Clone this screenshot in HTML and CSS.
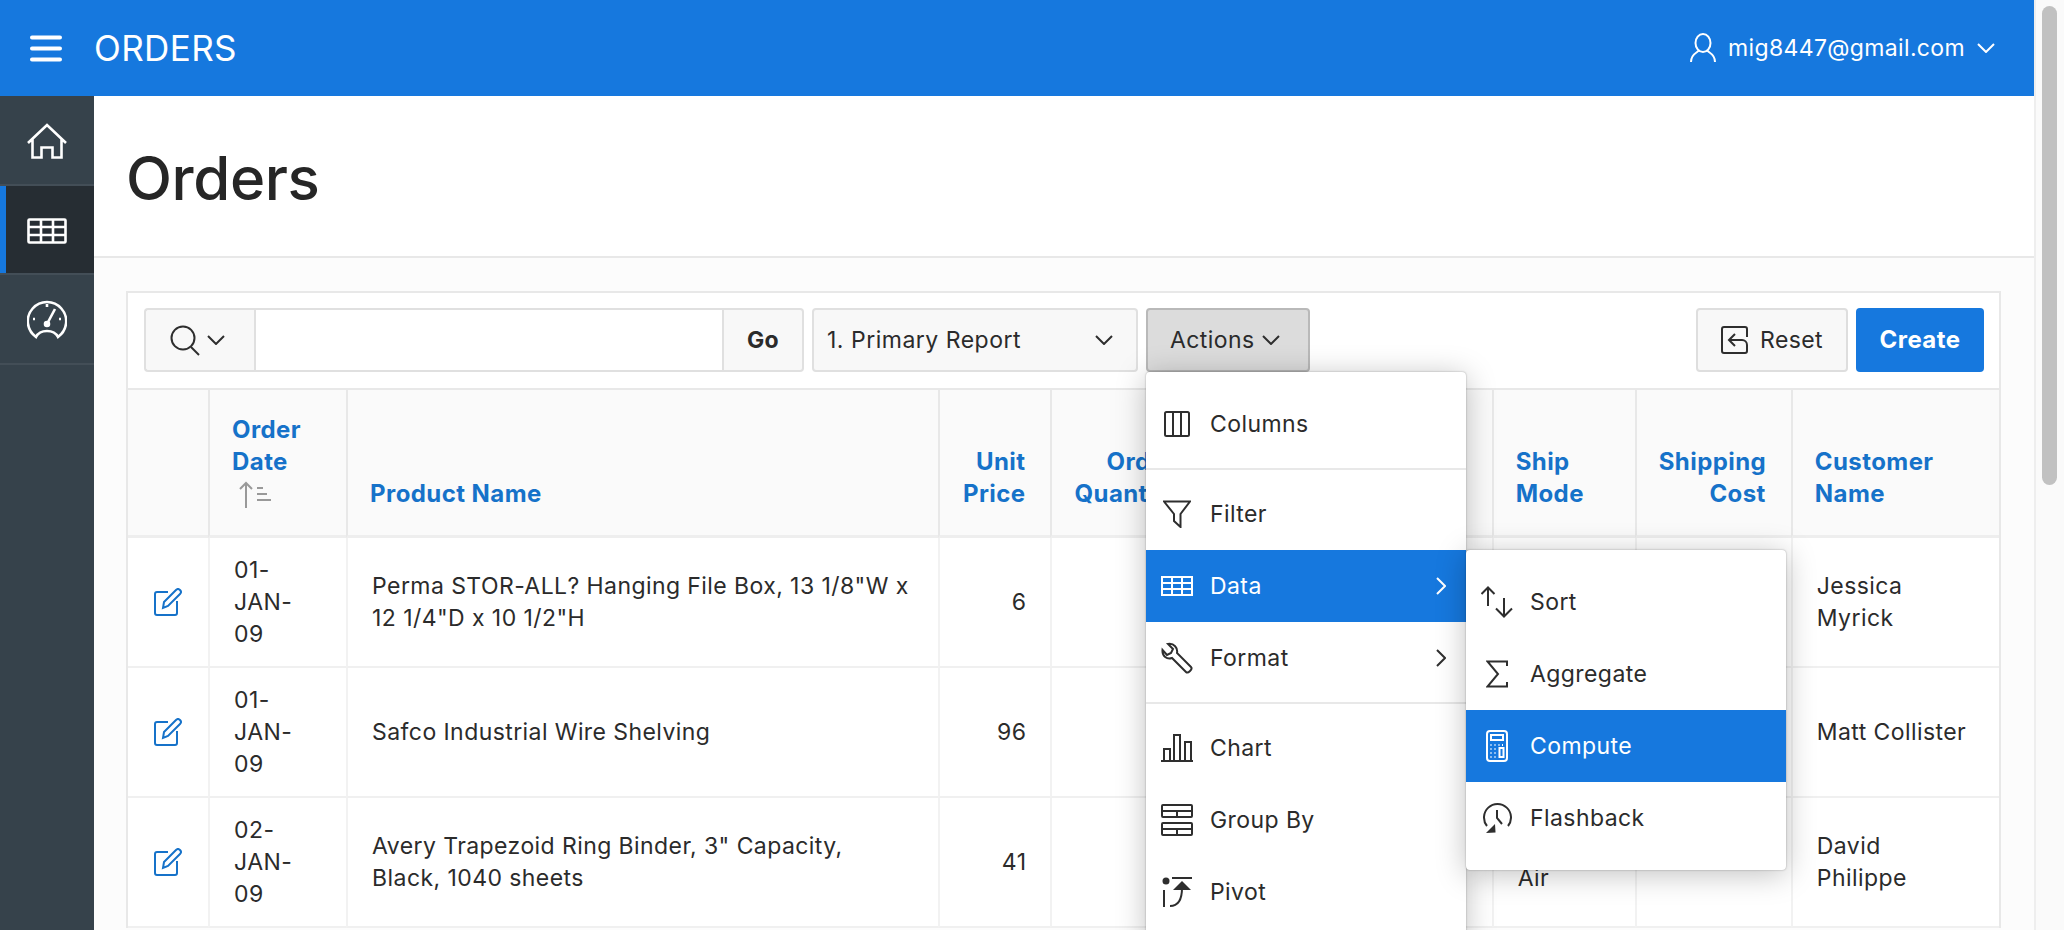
FILE: index.html
```html
<!DOCTYPE html>
<html lang="en">
<head>
  <meta charset="UTF-8" />
  <title>Orders</title>
  <link rel="stylesheet" href="styles.css">
</head>
<body>
  <div class="page">
    <header class="topbar">
      <svg class="burger" width="32" height="27" viewBox="0 0 32 27"><path d="M2 2.5H30M2 13.5H30M2 24.5H30" /></svg>
      <span class="app-name">ORDERS</span>
      <div class="user">
        <svg width="26" height="30" viewBox="0 0 26 30" class="line"><ellipse cx="13" cy="10" rx="7.5" ry="9" /><path d="M9 17C8 20 1 20 1 29M17 17C18 20 25 20 25 29" /></svg>
        <span class="user-name">mig8447@gmail.com</span>
        <svg width="18" height="10" viewBox="0 0 18 10" class="line"><path d="M1 1L9 9L17 1" /></svg>
      </div>
    </header>

    <div class="below">
      <nav class="sidenav">
        <a class="nav-item">
          <svg width="40" height="37" viewBox="0 0 40 37" class="line thick"><path d="M1 20L20 2L39 20M5.5 16V34.5H14.5V24.5H25.5V34.5H34.5V16" /></svg>
        </a>
        <a class="nav-item active">
          <svg width="40" height="26" viewBox="0 0 40 26" class="line thick"><rect x="1.5" y="1.5" width="37" height="23" rx="1" /><path d="M1.5 9H38.5M1.5 17H38.5M14 1.5V24.5M26 1.5V24.5" /></svg>
        </a>
        <a class="nav-item">
          <svg width="40" height="40" viewBox="0 0 40 40" class="line thick"><path d="M9 38A19.2 19.2 0 1 1 31 38Q28 32 20 32Q12 32 9 38Z" /><path d="M20 25L28 10M20 5V8M6 20H8M32 20H34" /><circle cx="20" cy="25" r="2" fill="#fff" /></svg>
        </a>
      </nav>

      <main class="content">
        <div class="title-bar">
          <h1>Orders</h1>
        </div>

        <div class="body-wrap">
          <section class="report">
            <div class="toolbar">
              <div class="search">
                <button class="search-type">
                  <svg width="30" height="31" viewBox="0 0 30 31" class="line dark"><circle cx="13" cy="13" r="11.5" /><path d="M21 22L29 30" /></svg>
                  <svg width="18" height="10" viewBox="0 0 18 10" class="line dark"><path d="M1 1L9 9L17 1" /></svg>
                </button>
                <input class="search-input" type="text" />
                <button class="go">Go</button>
              </div>
              <div class="report-select">
                <span>1. Primary Report</span>
                <svg width="18" height="10" viewBox="0 0 18 10" class="line dark"><path d="M1 1L9 9L17 1" /></svg>
              </div>
              <div class="actions-wrap">
                <button class="actions">Actions
                  <svg width="18" height="10" viewBox="0 0 18 10" class="line dark"><path d="M1 1L9 9L17 1" /></svg>
                </button>
                <div class="menu">
                  <ul>
                    <li class="menu-item">
                      <span class="menu-icon"><svg width="26" height="26" viewBox="0 0 26 26" class="line dark"><rect x="1" y="1" width="24" height="24" rx="1.5" /><path d="M9 1V25M17 1V25" /></svg></span>Columns
                    </li>
                    <li class="menu-sep"></li>
                    <li class="menu-item">
                      <span class="menu-icon"><svg width="28" height="28" viewBox="0 0 28 28" class="line dark"><path d="M1 1.5H27L17.5 14V27L11 21V14Z" /></svg></span>Filter
                    </li>
                    <li class="menu-item selected">
                      <span class="menu-icon"><svg width="32" height="20" viewBox="0 0 32 20" class="line"><rect x="1" y="1" width="30" height="18" /><path d="M1 7H31M1 13H31M11 1V19M21 1V19" /></svg></span>Data
                      <svg class="arrow" width="10" height="18" viewBox="0 0 10 18"><path d="M1 1L9 9L1 17" /></svg>
                      <div class="menu submenu">
                        <ul>
                          <li class="menu-item">
                            <span class="menu-icon"><svg width="32" height="32" viewBox="0 0 32 32" class="line dark"><path d="M7 1.5V20M0.5 8L7 1.5L13.5 8M23 12V30.5M15 22.5L23 30.5L31 22.5" /></svg></span>Sort
                          </li>
                          <li class="menu-item">
                            <span class="menu-icon"><svg width="22" height="28" viewBox="0 0 22 28" class="line dark"><path d="M21 6V1.5H1.5L12 14L1.5 26.5H21V22" /></svg></span>Aggregate
                          </li>
                          <li class="menu-item selected">
                            <span class="menu-icon"><svg width="22" height="32" viewBox="0 0 22 32" class="line"><rect x="1" y="1" width="20" height="30" rx="3" /><rect x="5" y="5" width="12" height="5" /><rect x="13.5" y="18" width="4" height="9" /><path d="M4.5 15H5.5M8.5 15H9.5M12.5 15H13.5M16 15H17M4.5 19H5.5M8.5 19H9.5M4.5 23H5.5M8.5 23H9.5M4.5 27H5.5M8.5 27H9.5" /></svg></span>Compute
                          </li>
                          <li class="menu-item">
                            <span class="menu-icon"><svg width="30" height="30" viewBox="0 0 30 30" class="line dark"><path d="M5 23A13.5 13.5 0 1 1 26 23M15 7V15L20 21" /><path class="solid" d="M4 30L13.5 29.5L13 21Z" /></svg></span>Flashback
                          </li>
                        </ul>
                      </div>
                    </li>
                    <li class="menu-item">
                      <span class="menu-icon"><svg width="32" height="32" viewBox="0 0 32 32" class="line dark"><path d="M30 25L16 11C17 6 13 1 7 2L12 7L10 11L6 13L1.5 8C1 14 6 18 11 16L25 30C27 32 32 27 30 25Z" /></svg></span>Format
                      <svg class="arrow" width="10" height="18" viewBox="0 0 10 18"><path d="M1 1L9 9L1 17" /></svg>
                    </li>
                    <li class="menu-sep"></li>
                    <li class="menu-item">
                      <span class="menu-icon"><svg width="32" height="28" viewBox="0 0 32 28" class="line dark"><path d="M0 27H32M3 27V15H9V27M13 27V1H19V27M24 27V8H30V27" /></svg></span>Chart
                    </li>
                    <li class="menu-item">
                      <span class="menu-icon"><svg width="32" height="32" viewBox="0 0 32 32" class="line dark"><rect x="1" y="1" width="30" height="12" rx="1" /><rect x="1" y="19" width="30" height="12" rx="1" /><path d="M1 7H31M16 7V13M1 25H31M16 25V31" /></svg></span>Group By
                    </li>
                    <li class="menu-item">
                      <span class="menu-icon"><svg width="32" height="32" viewBox="0 0 32 32" class="line dark"><circle class="solid" cx="5" cy="5" r="3.5" /><path d="M11 2H31M3 14V31M9 30C17 30 21 24 21 12" /><path class="solid" d="M12 14L21 5L30 14Z" /></svg></span>Pivot
                    </li>
                  </ul>
                </div>
              </div>
              <div class="toolbar-right">
                <button class="reset">
                  <svg width="28" height="28" viewBox="0 0 28 28" class="line dark"><path d="M26 11V3A2 2 0 0 0 24 1H3A2 2 0 0 0 1 3V25A2 2 0 0 0 3 27H24A2 2 0 0 0 26 25V19A5 5 0 0 0 21 14H9M14 8L8 14L14 20" /></svg>
                  Reset
                </button>
                <button class="create">Create</button>
              </div>
            </div>

            <table class="grid">
              <colgroup>
                <col class="c-edit"><col class="c-date"><col class="c-product"><col class="c-price"><col class="c-qty"><col class="c-sales"><col class="c-mode"><col class="c-cost"><col class="c-cust">
              </colgroup>
              <thead>
                <tr>
                  <th></th>
                  <th>Order Date
                    <svg class="sort-icon" width="32" height="32" viewBox="0 0 32 32"><path d="M7 30V5.5M1 11L7 5L13 11M18 10H24M18 16H28M18 22H32" /></svg>
                  </th>
                  <th>Product Name</th>
                  <th class="num">Unit Price</th>
                  <th class="num">Order Quantity</th>
                  <th class="num">Sales</th>
                  <th>Ship Mode</th>
                  <th class="num">Shipping Cost</th>
                  <th>Customer Name</th>
                </tr>
              </thead>
              <tbody>
                <tr>
                  <td class="edit"><svg width="28" height="28" viewBox="0 0 28 28" class="line blue"><path d="M14 4H3A2 2 0 0 0 1 6V25A2 2 0 0 0 3 27H21A2 2 0 0 0 23 25V13M10 14L22 2A2.5 2.5 0 0 1 26 6L14 18L9 20Z" /></svg></td>
                  <td class="date">01-JAN-09</td>
                  <td>Perma STOR-ALL? Hanging File Box, 13 1/8"W x 12 1/4"D x 10 1/2"H</td>
                  <td class="num">6</td>
                  <td class="num">9</td>
                  <td class="num">60</td>
                  <td>Regular Air</td>
                  <td class="num">3</td>
                  <td>Jessica Myrick</td>
                </tr>
                <tr>
                  <td class="edit"><svg width="28" height="28" viewBox="0 0 28 28" class="line blue"><path d="M14 4H3A2 2 0 0 0 1 6V25A2 2 0 0 0 3 27H21A2 2 0 0 0 23 25V13M10 14L22 2A2.5 2.5 0 0 1 26 6L14 18L9 20Z" /></svg></td>
                  <td class="date">01-JAN-09</td>
                  <td>Safco Industrial Wire Shelving</td>
                  <td class="num">96</td>
                  <td class="num">8</td>
                  <td class="num">780</td>
                  <td>Regular Air</td>
                  <td class="num">8</td>
                  <td>Matt Collister</td>
                </tr>
                <tr>
                  <td class="edit"><svg width="28" height="28" viewBox="0 0 28 28" class="line blue"><path d="M14 4H3A2 2 0 0 0 1 6V25A2 2 0 0 0 3 27H21A2 2 0 0 0 23 25V13M10 14L22 2A2.5 2.5 0 0 1 26 6L14 18L9 20Z" /></svg></td>
                  <td class="date">02-JAN-09</td>
                  <td>Avery Trapezoid Ring Binder, 3" Capacity, Black, 1040 sheets</td>
                  <td class="num">41</td>
                  <td class="num">7</td>
                  <td class="num">290</td>
                  <td>Regular Air</td>
                  <td class="num">5</td>
                  <td>David Philippe</td>
                </tr>
              </tbody>
            </table>
          </section>
        </div>
      </main>
    </div>
  </div>

  <div class="scrollbar"><div class="thumb"></div></div>
</body>
</html>
```

FILE: styles.css
```css
* {
  box-sizing: border-box;
}
html, body {
  height: 100%;
  margin: 0;
  overflow: hidden;
}
body {
  display: flex;
  font-family: Inter, "Noto Sans", sans-serif;
  font-size: 23px;
  line-height: 32px;
  letter-spacing: 0.42px;
  color: #2b2b2b;
  background: #fff;
}
ul {
  list-style: none;
  margin: 0;
  padding: 0;
}
button {
  font: inherit;
  letter-spacing: inherit;
  color: inherit;
  cursor: pointer;
}

/* svg line icons */
.line {
  fill: none;
  stroke: #fff;
  stroke-width: 2;
  flex: none;
}
.line.thick {
  stroke-width: 2.6;
}
.line.dark {
  stroke: #2e2e2e;
}
.line.blue {
  stroke: #1672c9;
}
.line .solid {
  fill: #2e2e2e;
  stroke: none;
}

.page {
  flex: 1;
  min-width: 0;
  display: flex;
  flex-direction: column;
  border-right: 2px solid #eee;
}
.scrollbar {
  width: 28px;
  flex: none;
  padding: 6px 7px 0 6px;
  background: #fafafa;
}
.thumb {
  height: 479px;
  border-radius: 8px;
  background: #c1c1c1;
}

/* top bar */
.topbar {
  height: 96px;
  flex: none;
  display: flex;
  align-items: center;
  padding: 0 39px 0 30px;
  background: #1678de;
  color: #fff;
}
.burger {
  fill: none;
  stroke: #fff;
  stroke-width: 4;
  stroke-linecap: round;
}
.app-name {
  margin-left: 32px;
  font-size: 35px;
  letter-spacing: 0.4px;
}
.user {
  margin-left: auto;
  display: flex;
  align-items: center;
}
.user-name {
  margin: 0 12px 0 12px;
  letter-spacing: 0.35px;
}

.below {
  flex: 1;
  display: flex;
  min-height: 0;
}

/* side nav */
.sidenav {
  width: 94px;
  flex: none;
  background: #36424b;
}
.nav-item {
  height: 89.5px;
  display: flex;
  align-items: center;
  justify-content: center;
  border-bottom: 2px solid #434e57;
}
.nav-item:first-child svg {
  margin-top: 3px;
}
.nav-item.active {
  background: #262d33;
  box-shadow: inset 6px 0 0 #1678de;
}
.nav-item.active svg {
  margin-top: 3px;
}

/* title */
.content {
  flex: 1;
  min-width: 0;
  background: #fcfcfc;
}
.title-bar {
  height: 162px;
  display: flex;
  align-items: center;
  padding-left: 32px;
  background: #fff;
  border-bottom: 2px solid #e8e8e8;
}
h1 {
  margin: 4px 0 0;
  font-size: 60px;
  font-weight: 500;
  line-height: 72px;
  letter-spacing: -0.4px;
  color: #262626;
}
.body-wrap {
  padding: 33px 33px 0 32px;
}
.report {
  border: 2px solid #e8e8e8;
  border-bottom: 0;
  background: #fff;
}

/* toolbar */
.toolbar {
  display: flex;
  align-items: stretch;
  height: 97px;
  padding: 15px 15px 16px 16px;
  border-bottom: 2px solid #e8e8e8;
}
.search {
  display: flex;
  width: 660px;
  margin-right: 8px;
}
.search-type {
  width: 110px;
  display: flex;
  align-items: center;
  gap: 7px;
  padding: 0 0 0 24px;
  background: #f8f8f8;
  border: 2px solid #e0e0e0;
  border-right: 0;
  border-radius: 4px 0 0 4px;
}
.search-input {
  flex: 1;
  min-width: 0;
  border: 2px solid #e0e0e0;
  background: #fff;
}
.go {
  width: 80px;
  background: #f8f8f8;
  border: 2px solid #e0e0e0;
  border-left: 0;
  border-radius: 0 4px 4px 0;
  font-weight: 700;
}
.report-select {
  width: 326px;
  margin-right: 8px;
  display: flex;
  align-items: center;
  justify-content: space-between;
  padding: 0 23px 0 13px;
  background: #f8f8f8;
  border: 2px solid #e0e0e0;
  border-radius: 4px;
  letter-spacing: 0.5px;
}
.actions-wrap {
  position: relative;
  width: 164px;
  z-index: 2;
}
.actions {
  width: 100%;
  height: 100%;
  display: flex;
  align-items: center;
  gap: 7px;
  padding: 0 0 0 22px;
  background: #dcdcdc;
  border: 2px solid #b9b9b9;
  border-radius: 4px;
}
.toolbar-right {
  margin-left: auto;
  display: flex;
  gap: 8px;
}
.reset {
  width: 152px;
  display: flex;
  align-items: center;
  gap: 11px;
  padding: 0 0 0 23px;
  background: #f8f8f8;
  border: 2px solid #dedede;
  border-radius: 4px;
}
.create {
  width: 128px;
  background: #1678de;
  border: 0;
  border-radius: 4px;
  color: #fff;
  font-size: 24px;
  font-weight: 700;
}

/* actions menu */
.menu {
  position: absolute;
  top: 100%;
  left: 0;
  width: 320px;
  padding: 16px 0;
  background: #fff;
  border-radius: 4px;
  box-shadow: 0 0 2px rgba(0,0,0,0.35), 0 4px 30px rgba(0,0,0,0.25);
}
.menu-item {
  position: relative;
  height: 72px;
  display: flex;
  align-items: center;
  padding-left: 64px;
}
.menu-item.selected {
  background: #1678de;
  color: #fff;
}
.menu-icon {
  position: absolute;
  left: 15px;
  width: 32px;
  display: flex;
  justify-content: center;
}
.menu-sep {
  height: 18px;
  display: flex;
  align-items: center;
}
.menu-sep::before {
  content: "";
  width: 100%;
  height: 2px;
  background: #e8e8e8;
}
.arrow {
  position: absolute;
  right: 20px;
  fill: none;
  stroke: #2e2e2e;
  stroke-width: 2;
}
.selected > .arrow {
  stroke: #fff;
}
.submenu {
  top: 0;
  left: 100%;
  color: #2b2b2b;
}

/* report table */
.grid {
  width: 100%;
  table-layout: fixed;
  border-collapse: separate;
  border-spacing: 0;
}
.c-edit { width: 80px; }
.c-date { width: 138px; }
.c-product { width: 592px; }
.c-price { width: 112px; }
.c-qty { width: 150px; }
.c-sales { width: 291px; }
.c-mode { width: 143px; }
.c-cost { width: 156px; }
.c-cust { width: 208px; }

th {
  padding: 24px 25px 25px 22px;
  text-align: left;
  vertical-align: bottom;
  font-size: 24px;
  font-weight: 700;
  letter-spacing: 0.42px;
  color: #1672c9;
  background: #fafafa;
  border-left: 2px solid #e8e8e8;
  border-bottom: 3px solid #eee;
}
td {
  padding: 16px 24px;
  vertical-align: middle;
  border-left: 2px solid #f2f2f2;
  border-bottom: 2px solid #f0f0f0;
}
th:first-child, td:first-child {
  border-left: 0;
}
td:last-child {
  padding-right: 30px;
}
.num {
  text-align: right;
}
.date {
  padding-right: 40px;
}
.edit {
  padding: 0;
  text-align: center;
}
.edit svg {
  display: block;
  margin: 0 auto;
}
.sort-icon {
  display: block;
  margin-left: 7px;
  fill: none;
  stroke: #999;
  stroke-width: 2;
}
```
